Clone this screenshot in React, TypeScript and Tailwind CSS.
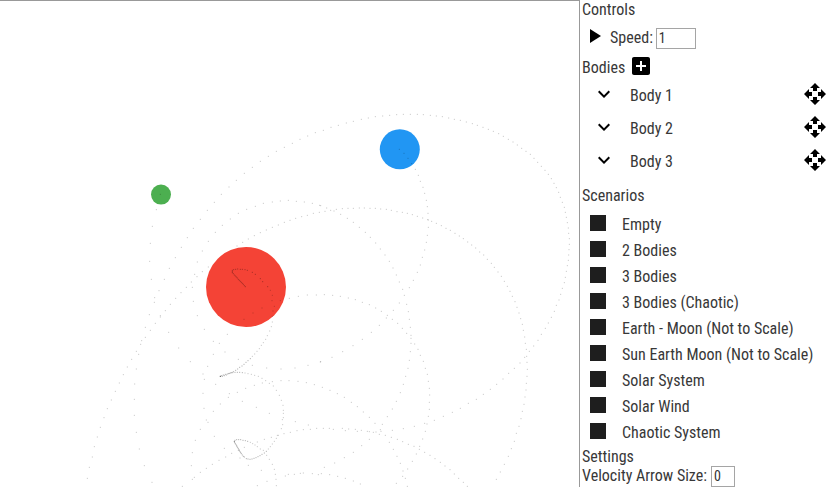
import React from "react";

type Trail = { x: number; y: number; dots: string };

// Sampled trail positions, in thirds of a pixel relative to each tile's origin.
const trails: Trail[] = [
  {
    x: 70,
    y: 90,
    dots: `760,121 736,128 713,138 690,148 667,160 643,172 619,184 595,199 571,214 547,232 523,250 499,271 477,291 454,313 433,337 412,361 391,388 370,415 352,443 334,472 316,503 298,535 283,568
    271,313 259,359 247,409 241,460 239,514 244,568
    770,354 749,346 727,340 703,336 679,334 655,331 631,333 607,336 580,340 556,349 530,358 505,370 481,387 457,406 436,427 415,454 397,483 382,516 374,553 367,592
    765,364 748,367 730,370 712,376 695,380 677,385 660,391 643,397 625,405 607,412 589,420 571,428 553,437 535,447 518,457 501,468 415,531 397,545 381,560 364,576 349,592`,
  },
  {
    x: 320,
    y: 90,
    dots: `33,112 55,106 79,99 100,94 124,88 145,84 166,80 188,78 209,76 230,74 250,73 271,73 292,73 310,74 331,76 349,78 367,80 386,84 403,88 421,91 439,96 457,101 472,106 489,112 505,118 520,124 536,131 550,139 565,148 579,156 592,165 605,175 618,184 631,193 642,205 653,217 664,229 675,241 685,253 694,266 702,280 709,293 716,307 721,322 727,337 733,352 736,367 739,382 742,398 745,414 746,430 748,446 748,463 747,479 746,495 745,511 742,527 739,544 736,562 733,578
    238,178 252,190 264,205 275,221 286,238 295,256 301,274 309,292 314,310 319,331 322,350 324,370 323,389 325,412 322,436 319,457 314,480 307,502 301,525 292,547 280,571
    32,361 49,358 67,356 84,355 100,355 118,354 133,354 150,355 166,355 182,357 199,358 214,361 231,365 247,367 262,370 277,374 292,379 308,384 325,390 335,394 349,400 364,407 378,415 391,421 405,430 418,438 430,446 443,456 455,465 467,474 479,486 491,495 502,508 514,520 523,532 534,546 544,559 553,574 562,589
    2,347 42,363 62,373 82,385 100,397 118,412 136,427 151,442 167,459 181,477 195,495 208,514 219,534 229,555 238,576`,
  },
  {
    x: 70,
    y: 287,
    dots: `333,17 317,34 301,52 286,71 271,90 271,86 256,109 241,130 226,151 212,172 199,193 185,217 172,240 160,263 148,288 136,313 124,339 112,365 102,392 91,421 82,450 73,479 67,510 58,541 52,574
    267,11 254,32 253,46 238,83 226,121 215,161 206,202 199,246 194,291 193,337 193,385 199,436 208,486 223,536 246,586
    370,43 382,86 403,127 430,163 430,202 413,238 399,261 403,277 399,319 402,364 409,399 414,406 391,427 376,460 367,497 364,536
    296,136 326,183 361,224 437,292 448,169 472,142 465,195 505,217 547,235 590,243 633,246 675,243 714,235 751,225
    658,34 685,28 712,24 739,24 631,41 576,63 549,78 522,97
    601,10 607,25 606,41 613,58 609,72 607,88 607,105 604,119 599,132 592,146 587,157 580,167 574,175 568,185 561,193 554,201 547,208
    525,258 534,260 544,262 554,265 565,268 576,274 587,281 598,289 607,284 610,297 619,310 628,325 634,340 639,355 640,370 640,379 640,392 637,398 638,413 634,425 625,445 619,454 613,463 607,471 601,479 595,486
    541,466 548,470 555,474 562,479 571,486 580,490 590,505 598,517 607,532 613,547 616,562 618,577 619,596
    451,351 475,331 478,320 502,316 527,304 553,295 577,288 633,281 657,281 684,283 709,287 733,293
    517,343 559,361 598,379 676,404 715,414 430,373 433,448 463,484
    467,510 447,520 427,532 409,544 391,556 373,571 367,577 337,598 485,499 505,490 523,481 562,465 583,457 604,451 622,445 642,440 661,436 681,431 700,428 721,427 740,424
    510,513 535,535 574,550 591,583 562,596 646,567 655,562 673,562 691,559 700,558 727,560 745,563`,
  },
  {
    x: 320,
    y: 287,
    dots: `248,7 253,25 260,52 265,74 268,97 271,121 273,145 273,154 273,169 271,194 268,220 264,244 257,268 250,292 241,317 229,343 217,366 202,389 187,412 181,428 168,435 148,457 125,476 100,496 73,512 44,528 13,541
    268,2 238,48 220,70 199,93 178,115 154,136 127,157 99,176 68,194 36,211 2,224
    13,23 38,25 61,28 85,33 106,38 127,46 148,53 167,63 184,73 202,85 217,97 233,109 247,124 260,139 284,171 294,187 301,205 310,223 316,244 322,262 325,283 328,304 329,324 328,346 328,367 325,388 321,411 316,433 308,456 298,487 289,501 277,523 263,546 249,552
    570,13 577,28 585,44 591,61 597,78 602,95 607,112 610,130 614,150 616,169 619,187 620,208 621,226 622,247 621,268 619,289 618,309 615,330 612,352 607,373 603,395 597,418 589,439 583,463 574,485 565,508 553,532 541,555 529,577
    727,4 722,22 717,39 709,55 703,73 694,91 685,108 676,124 664,142 654,160 641,177 628,193 614,211 600,228 583,244 566,259 549,276 530,292 511,307 490,322 469,337 445,349 421,364 397,376 370,388 343,400 314,409 283,418 250,425 217,430 183,433 148,434 112,433 76,431 40,427
    7,301 30,310 52,320 73,331 94,346 112,359 130,375 148,391 165,409 208,466 220,487 231,508 241,529 248,568 256,574 262,598
    10,424 28,424 67,424 86,426 106,427 124,430 142,433 160,436 178,442 196,445 214,451 232,457 248,464 265,472 282,478 299,478 314,496 330,505 345,515 361,526 375,537 390,548 403,561 416,574 430,586 442,598
    4,560 29,563 53,568 76,574 100,582 121,591 229,589`,
  },
];

// Slow sections, where consecutive samples nearly touch.
const denseTrails: Trail[] = [
  {
    x: 70,
    y: 90,
    dots: `526,590 523,587 520,583 517,580 514,577 511,574 508,571 505,568 502,564 499,561 496,558 493,555 490,551 487,548 487,545 487,541 491,539 497,538 503,537 511,538 517,538 525,539 532,541 547,547 556,553 571,566 578,575 593,590`,
  },
  {
    x: 70,
    y: 287,
    dots: `541,215 534,221 528,226 522,232 516,237 509,241 503,246 497,250 490,254 484,257 478,259 472,261 466,262 460,264 455,266 451,268 451,268 451,268 457,268 463,266 469,264 476,260 482,258 488,257 495,256 502,256 509,256 517,257
    589,493 583,498 576,502 570,506 564,509 558,512 552,514 546,516 540,517 534,516 529,515 523,510 520,508 517,504 514,500 512,497 510,494 508,491 507,488 505,485 503,482 501,479 500,476 498,473 496,470 494,467 493,464 493,463 495,460 500,458 506,458 512,458 519,460 526,461 533,463`,
  },
];

function Dots({ list, opacity }: { list: Trail[]; opacity: number }) {
  return (
    <g fill="#000" fillOpacity={opacity}>
      {list.flatMap((t, i) =>
        t.dots
          .trim()
          .split(/\s+/)
          .map((d, j) => {
            const [a, b] = d.split(",").map(Number);
            return (
              <rect
                key={`${i}-${j}`}
                x={(a - 1.5) / 3 + t.x}
                y={(b - 1.5) / 3 + t.y}
                width="1"
                height="1"
              />
            );
          })
      )}
    </g>
  );
}

function Icon({ d, className = "" }: { d: string; className?: string }) {
  return (
    <svg viewBox="0 0 24 24" fill="#000" className={`size-6 shrink-0 ${className}`}>
      <path d={d} />
    </svg>
  );
}

const PLAY = "M8 5v14l11-7z";
const ADD_BOX =
  "M19 3H5c-1.11 0-2 .9-2 2v14c0 1.1.89 2 2 2h14c1.1 0 2-.9 2-2V5c0-1.1-.9-2-2-2zm-2 10h-4v4h-2v-4H7v-2h4V7h2v4h4v2z";
const EXPAND = "M16.59 8.59L12 13.17 7.41 8.59 6 10l6 6 6-6z";
const MOVE =
  "M10 9h4V6h3l-5-5-5 5h3v3zm-1 1H6V7l-5 5 5 5v-3h3v-4zm14 2l-5-5v3h-3v4h3v3l5-5zm-9 3h-4v3H7l5 5 5-5h-3v-3z";

const scenarios = [
  "Empty",
  "2 Bodies",
  "3 Bodies",
  "3 Bodies (Chaotic)",
  "Earth - Moon (Not to Scale)",
  "Sun Earth Moon (Not to Scale)",
  "Solar System",
  "Solar Wind",
  "Chaotic System",
];

export default function App() {
  return (
    <div className="flex h-[487px] w-[830px] overflow-hidden bg-white">
      <main className="h-full w-[580px] shrink-0 border-t border-r border-[#999]">
        <svg viewBox="0 1 579 486" className="block h-[486px] w-[579px]">
          <circle cx="246" cy="287" r="40" fill="#f44336" />
          <circle cx="399.8" cy="149.3" r="20" fill="#2196f3" />
          <circle cx="161" cy="194.6" r="10" fill="#4caf50" />
          <Dots list={trails} opacity={0.24} />
          <Dots list={denseTrails} opacity={0.34} />
        </svg>
      </main>

      <aside className="flex h-full w-[250px] flex-col pl-[2px] font-['Roboto_Condensed','Roboto',sans-serif] text-base leading-[19px] whitespace-nowrap text-[#383838] [font-stretch:75%]">
        <h2>Controls</h2>
        <div className="flex h-[38px] items-center">
          <Icon d={PLAY} className="-mt-1" />
          <label className="ml-1 -mt-px">Speed:</label>
          <input
            defaultValue="1"
            className="ml-[3px] h-[21px] w-10 border border-[#a5a5a5] bg-white px-[2px] text-[14px] text-[#333]"
          />
        </div>
        <div className="flex h-[21px] items-center">
          <h2>Bodies</h2>
          <Icon d={ADD_BOX} className="-mt-1 ml-1" />
        </div>
        <ul>
          {["Body 1", "Body 2", "Body 3"].map((name) => (
            <li key={name} className="flex h-[33px] items-center pl-[10px]">
              <Icon d={EXPAND} className="-mt-px" />
              <span className="mt-px ml-[14px]">{name}</span>
              <Icon d={MOVE} className="-mt-[2px] mr-[3px] ml-auto" />
            </li>
          ))}
        </ul>
        <h2 className="mt-[9px]">Scenarios</h2>
        <ul className="mt-[5px]">
          {scenarios.map((name) => (
            <li key={name} className="flex h-[26px] items-center pl-2">
              <span className="size-4 bg-[#1e1e1e]" />
              <span className="mt-[2px] ml-4">{name}</span>
            </li>
          ))}
        </ul>
        <h2 className="mt-[3px]">Settings</h2>
        <div className="-mt-px flex h-[21px] items-center">
          <label>Velocity Arrow Size:</label>
          <input
            defaultValue="0"
            className="mt-px ml-1 h-[21px] w-6 border border-[#a5a5a5] bg-white px-[2px] text-[14px] text-[#333]"
          />
        </div>
      </aside>
    </div>
  );
}
